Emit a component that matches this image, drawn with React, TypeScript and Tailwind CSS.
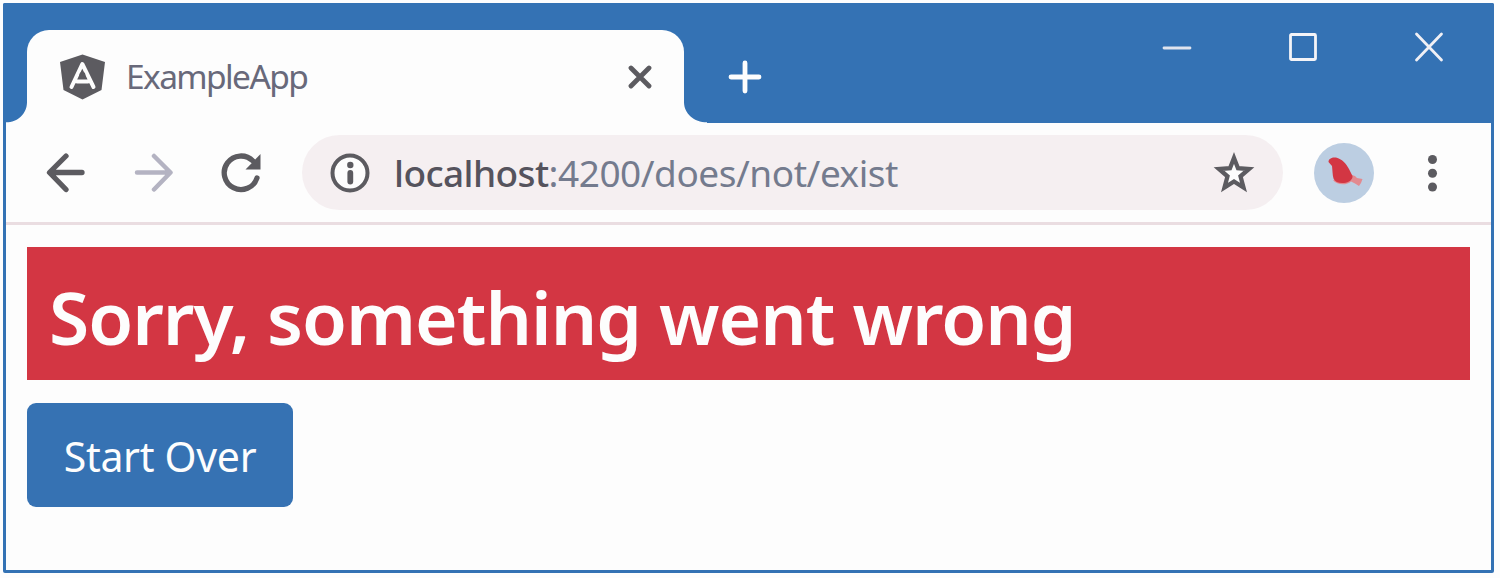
import React from "react";

const ink = "#5c5b60";

function TitleBar() {
  return (
    <header className="flex h-[120px] bg-[#3472b4]">
      <div className="flex h-full w-6 items-end">
        <svg className="ml-[3px] block h-[21px] w-[21px]" viewBox="0 0 21 21">
          <path d="M21 0V21H0V20.300C12 20.300 21 11.500 21 0Z" fill="#fdfdfd" />
        </svg>
      </div>
      <div className="mt-[27px] flex h-[93px] w-[657px] items-center rounded-t-[22px] bg-[#fdfdfd] pl-[33px] pr-[32px]">
        <svg className="h-[46px] w-[46px] shrink-0" viewBox="0 0 46 46">
          <path d="M22.500 0.500 45 8 41.500 36 22.500 45.500 3.500 36 0 8Z" fill={ink} />
          <path
            d="M11.500 33 22.300 10 33.500 33M17 27.500H28"
            fill="none"
            stroke="#fdfdfd"
            strokeWidth="4"
            strokeLinecap="round"
            strokeLinejoin="round"
          />
          <circle cx="22.400" cy="21" r="3" fill={ink} />
        </svg>
        <span className="-mt-px ml-[20px] text-[33.5px] leading-[46px] tracking-[-1.6px] whitespace-nowrap text-[#68697a]">
          ExampleApp
        </span>
        <svg className="ml-auto h-[24px] w-[24px] shrink-0" viewBox="0 0 24 24">
          <path d="M3 3 21 21M21 3 3 21" stroke={ink} strokeWidth="4.800" strokeLinecap="round" />
        </svg>
      </div>
      <div className="flex w-[23px] items-end">
        <svg className="block h-[21px] w-[23px]" viewBox="0 0 23 21">
          <path d="M0 0V21H23V20.300C10 20.300 0 11.500 0 0Z" fill="#fdfdfd" />
        </svg>
      </div>
      <svg className="mt-[57px] ml-[21px] h-[34px] w-[34px]" viewBox="0 0 34 34">
        <path d="M17 3V31M3 17H31" stroke="#fdfdfd" strokeWidth="4.800" strokeLinecap="round" />
      </svg>
      <div className="mt-[29px] mr-[50px] ml-auto flex h-[30px] items-center gap-[96px]">
        <svg className="h-[30px] w-[30px]" viewBox="0 0 30 30">
          <path d="M2 16H28" stroke="#e0e4ee" strokeWidth="2.800" strokeLinecap="round" />
        </svg>
        <svg className="h-[30px] w-[30px]" viewBox="0 0 30 30">
          <rect x="2.500" y="2.500" width="25" height="25" rx="1" fill="none" stroke="#f4f4f8" strokeWidth="2.800" />
        </svg>
        <svg className="h-[30px] w-[30px]" viewBox="0 0 30 30">
          <path d="M2.500 2 27.500 28M27.500 2 2.500 28" stroke="#f0f0f5" strokeWidth="2.800" strokeLinecap="round" />
        </svg>
      </div>
    </header>
  );
}

function Toolbar() {
  return (
    <div className="flex h-[102px] items-center border-b-[3px] border-[#eadde1] pr-[50px] pl-[40px]">
      <svg className="h-[40px] w-[40px]" viewBox="0 0 40 40">
        <path d="M36 19.500H4M20 3 3.500 19.500 20 36.500" fill="none" stroke={ink} strokeWidth="5.300" strokeLinecap="round" strokeLinejoin="round" />
      </svg>
      <svg className="ml-[48px] h-[40px] w-[40px]" viewBox="0 0 40 40">
        <path d="M3 19.500H36M20 3 36.500 19.500 20 36.500" fill="none" stroke="#b4b3c2" strokeWidth="4.500" strokeLinecap="round" strokeLinejoin="round" />
      </svg>
      <svg className="ml-[47px] h-[40px] w-[40px]" viewBox="0 0 40 40">
        <path d="M36 25A16.800 16.800 0 1 1 32 8" fill="none" stroke={ink} strokeWidth="5.300" strokeLinecap="round" />
        <path d="M39.500 1V16.500H24.500Z" fill={ink} />
      </svg>
      <div className="ml-[41px] flex h-[75px] w-[981px] items-center rounded-full bg-[#f5eff1] pr-[28px] pl-[28px]">
        <svg className="h-[40px] w-[40px] shrink-0" viewBox="0 0 40 40">
          <circle cx="20" cy="20" r="17.500" fill="#fdfdfd" stroke={ink} strokeWidth="4" />
          <circle cx="20.300" cy="12" r="3.200" fill={ink} />
          <path d="M20.300 20V28.500" stroke={ink} strokeWidth="5.800" strokeLinecap="round" />
        </svg>
        <span className="ml-[24px] text-[37px] leading-[50px] tracking-[-0.45px] whitespace-nowrap text-[#747b8e]">
          <span className="font-medium tracking-[-0.6px] text-[#55535d]">localhost</span>:4200/does/not/exist
        </span>
        <svg className="ml-auto h-[42px] w-[42px] shrink-0" viewBox="0 0 42 42">
          <path
            d="M21 6 25 16.200 36 17 27.500 24.300 30.500 35.500 21 29.500 11.500 35.500 14.500 24.300 6 17 17 16.200Z"
            fill="#fdfdfd"
            stroke={ink}
            strokeWidth="4.300"
          />
        </svg>
      </div>
      <svg className="ml-[30px] h-[62px] w-[62px]" viewBox="0 0 62 62">
        <circle cx="31" cy="31" r="30" fill="#bccee2" />
        <path d="M36 32 42 34 44 36 49.500 37 48 41 46 44 42 41.500 38 39.500C34 43.500 24 43.500 20 38Z" fill="#e28a90" />
        <path d="M15.500 20C15.500 16.500 19 15 23 15.500C29 17 33 21.500 36 27L39.500 34C40 37.500 36 40.500 31 41C26 41.500 22 40 20.500 36.500C19.500 33 19.500 28 19 24Z" fill="#d33643" />
      </svg>
      <svg className="ml-auto h-[40px] w-[16px]" viewBox="0 0 16 40">
        <circle cx="7.500" cy="6.500" r="4.500" fill={ink} />
        <circle cx="7.500" cy="20.200" r="4.500" fill={ink} />
        <circle cx="7.500" cy="34" r="4.500" fill={ink} />
      </svg>
    </div>
  );
}

export default function App() {
  return (
    <div className="h-[578px] w-[1500px] bg-[#fdfdfd] pt-[3px] pl-[3px] font-['Noto_Sans','Open_Sans',sans-serif]">
      <div className="flex h-[570px] w-[1491px] flex-col overflow-hidden rounded-[2px] bg-[#3472b4]">
        <TitleBar />
        <div className="mx-[3px] mb-[3px] flex-1 bg-[#fdfdfd]">
          <Toolbar />
          <main className="pt-[22px] pr-[21px] pl-[21px]">
            <h1 className="flex h-[133px] items-center bg-[#d33643] pt-[6px] pl-[22px] text-[73px] leading-[100px] font-semibold tracking-[-1px] whitespace-nowrap text-[#fdfdfd]">
              <span>Sorry, something went wrong</span>
            </h1>
            <button className="mt-[23px] flex h-[104px] w-[266px] items-center justify-center rounded-[9px] bg-[#3672b3] pt-[2px] text-[41px] leading-[56px] tracking-[-0.3px] whitespace-nowrap text-[#fdfdfd]">
              <span>Start Over</span>
            </button>
          </main>
        </div>
      </div>
    </div>
  );
}
